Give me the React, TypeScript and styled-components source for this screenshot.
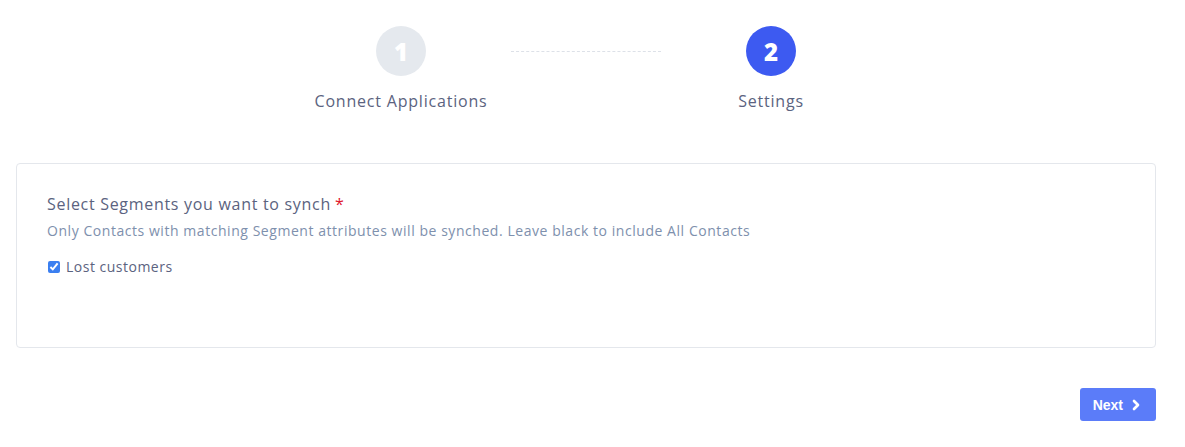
import { ChevronRight } from "lucide-react";
import styled, { createGlobalStyle } from "styled-components";

const GlobalStyle = createGlobalStyle`
  body {
    margin: 0;
    background: #ffffff;
    font-family: "Open Sans", "Noto Sans", sans-serif;
  }
`;

const Page = styled.div`
  padding: 26px 29px 0 16px;
`;

const Stepper = styled.div`
  display: flex;
  justify-content: center;
  align-items: flex-start;
`;

const Step = styled.div`
  width: 220px;
  display: flex;
  flex-direction: column;
  align-items: center;
`;

const StepCircle = styled.div<{ $active?: boolean }>`
  width: 50px;
  height: 50px;
  border-radius: 50%;
  background-color: ${(props) => (props.$active ? "#3d5af1" : "#e5e9ee")};
  color: #ffffff;
  display: flex;
  align-items: center;
  justify-content: center;
  font-size: 24px;
  font-weight: 800;
`;

const StepLabel = styled.div`
  margin-top: 13px;
  color: #5b6380;
  font-size: 16px;
  line-height: 24px;
  letter-spacing: 0.8px;
`;

const Connector = styled.div`
  width: 150px;
  margin-top: 25px;
  border-top: 1px dashed #dde1e8;
`;

const Card = styled.div`
  margin-top: 50px;
  min-height: 124px;
  padding: 29px 30px 30px 30px;
  border: 1px solid #e4e7ec;
  border-radius: 4px;
`;

const FieldTitle = styled.div`
  color: #5b6380;
  font-size: 16px;
  line-height: 22px;
  letter-spacing: 0.7px;
`;

const Required = styled.span`
  color: #e0162b;
  margin-left: 4px;
`;

const FieldHint = styled.div`
  margin-top: 6px;
  color: #7e90ad;
  font-size: 14px;
  line-height: 20px;
  letter-spacing: 0.55px;
`;

const CheckRow = styled.label`
  margin-top: 16px;
  display: flex;
  align-items: center;
  gap: 6px;
  color: #5b6380;
  font-size: 14px;
  line-height: 20px;
  letter-spacing: 0.5px;
`;

const CheckBox = styled.input`
  width: 12px;
  height: 12px;
  margin: 0 0 0 1px;
  accent-color: #3b7ff0;
`;

const Footer = styled.div`
  display: flex;
  justify-content: flex-end;
  margin-top: 40px;
`;

const NextButton = styled.button`
  display: flex;
  align-items: center;
  gap: 5px;
  height: 33px;
  padding: 0 12px 0 13px;
  border: none;
  border-radius: 3px;
  background-color: #5b7cf9;
  color: #ffffff;
  font-family: "Liberation Sans", Arial, sans-serif;
  font-size: 14px;
  font-weight: 700;
`;

export default function App() {
  return (
    <>
      <GlobalStyle />
      <Page>
        <Stepper>
          <Step>
            <StepCircle>1</StepCircle>
            <StepLabel>Connect Applications</StepLabel>
          </Step>
          <Connector />
          <Step>
            <StepCircle $active>2</StepCircle>
            <StepLabel>Settings</StepLabel>
          </Step>
        </Stepper>

        <Card>
          <FieldTitle>
            Select Segments you want to synch<Required>*</Required>
          </FieldTitle>
          <FieldHint>
            Only Contacts with matching Segment attributes will be synched. Leave black to include All Contacts
          </FieldHint>
          <CheckRow>
            <CheckBox type="checkbox" defaultChecked />
            Lost customers
          </CheckRow>
        </Card>

        <Footer>
          <NextButton>
            Next
            <ChevronRight size={16} strokeWidth={4} />
          </NextButton>
        </Footer>
      </Page>
    </>
  );
}
